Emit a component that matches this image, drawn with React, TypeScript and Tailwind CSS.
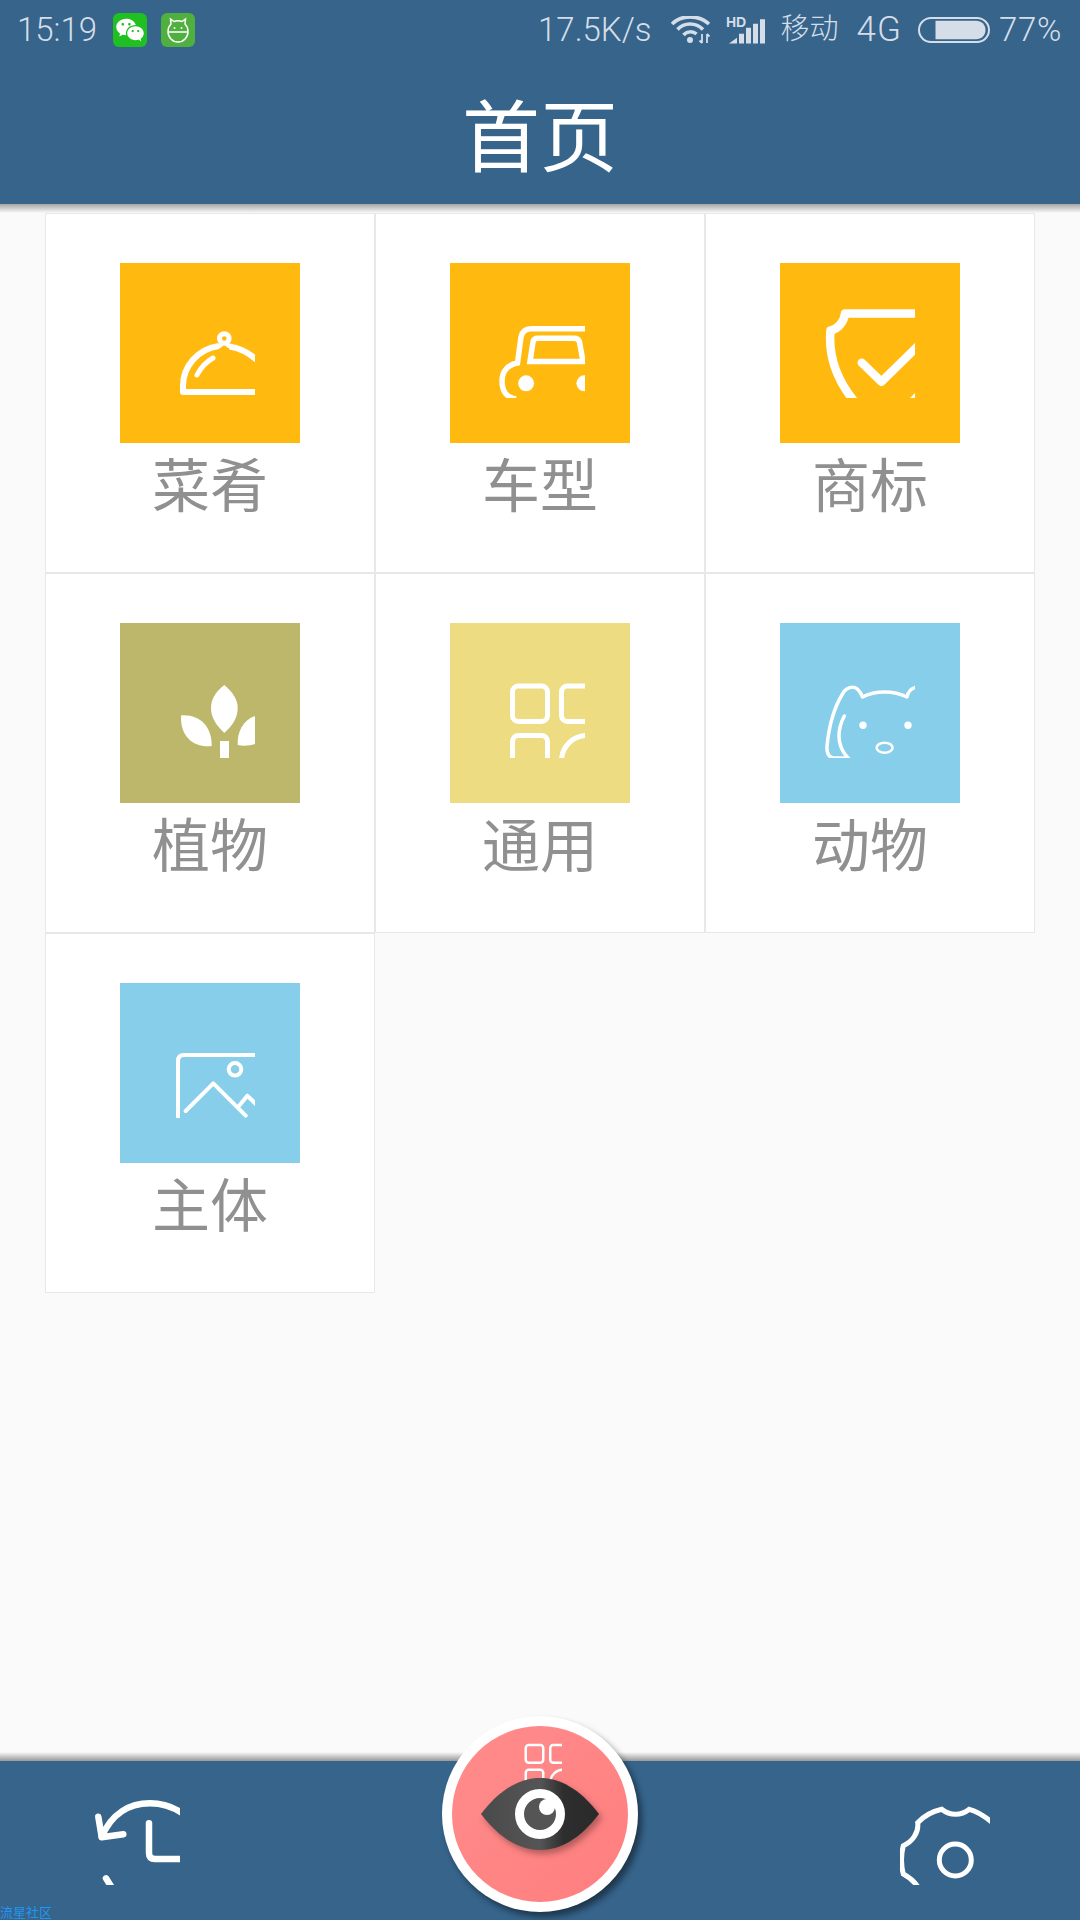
import type { ReactNode } from 'react';
import { RiWechatFill } from 'react-icons/ri';

const Icon = ({ children, size = 90 }: { children: ReactNode; size?: number }) => (
  <svg width={size} height={size} viewBox="0 0 90 90" fill="none" stroke="white" className="block overflow-hidden">
    {children}
  </svg>
);

const DishIcon = () => (
  <Icon>
    <g strokeWidth="6">
      <path d="M100 84 H18 V78 C18 58 33 41 54 38" strokeLinejoin="round" />
      <circle cx="59.3" cy="30.5" r="4.8" strokeWidth="5" />
      <path d="M53 38.5 C55.5 38 57 36.5 57 34 M65.5 38.5 C63 38 61.7 36.5 61.5 34" strokeWidth="4" />
      <path d="M64.5 38.5 C75 40 84 45 92 52" />
    </g>
    <path d="M48 50 C41 54 36 59 32 67" strokeWidth="5" strokeLinecap="round" />
  </Icon>
);

const CarIcon = () => (
  <Icon>
    <g strokeWidth="5.5">
      <path d="M95 20.7 H36 C30 20.7 27 24 26 29 L22.5 55 C12 57 7 64 7 73 C7 82 10 89 21 91" />
      <path d="M90 53.5 H35 L38 34 C38.5 31.5 40.5 30.3 43 30.3 H79 C82 30.3 84 32 84.5 34 L88 53.5" />
    </g>
    <circle cx="31.1" cy="75.3" r="8" fill="white" stroke="none" />
    <circle cx="89.4" cy="75.3" r="8" fill="white" stroke="none" />
  </Icon>
);

const ShieldIcon = () => (
  <Icon>
    <g strokeWidth="8.5">
      <path d="M95 5.5 H20 C19 14 13 21 5.5 22.5 C3 50 12 72 29 93" strokeLinejoin="round" />
      <path d="M36.8 54.7 L56.4 73.7 L95 36" strokeLinecap="round" strokeLinejoin="round" />
    </g>
    <path d="M90 85 L85 90 H90 Z" fill="white" stroke="none" />
  </Icon>
);

const PlantIcon = () => (
  <Icon>
    <g fill="white" stroke="none">
      <path d="M59.3 17 C50 24 46 32 46 40 C46 50 52 58 59.3 65 C67 58 72.7 50 72.7 40 C72.7 32 68 24 59.3 17 Z" />
      <path d="M16 47.5 C34 46 47 58 46.7 78 C30 80 15 70 16 47.5 Z" />
      <path d="M90 48 C78 52 72 64 72.7 77 C78 78 84 78 90 76 Z" />
      <rect x="55" y="73" width="9" height="17" />
    </g>
  </Icon>
);

const GridIcon = ({ size = 90 }: { size?: number }) => (
  <Icon size={size}>
    <g strokeWidth="5">
      <rect x="17.5" y="18" width="35" height="35.5" rx="6" />
      <rect x="66.5" y="18" width="40" height="35.5" rx="6" />
      <rect x="17.5" y="67.5" width="35" height="35" rx="6" />
      <path d="M66.5 92 A25.5 25.5 0 0 1 92 67.5" />
    </g>
  </Icon>
);

const PigIcon = () => (
  <Icon>
    <g strokeWidth="3.5" strokeLinejoin="round">
      <path d="M24 90 H8 C3.5 89 1.7 84 2 78 C4 58 10 38 17.5 26 C20 21 24 19.3 28 19.3 C32 19.3 35 23 37.5 29 C44 25.5 52 24 59.5 24 C67 24 75 25.5 82 29 C83 24 85 20.5 91 19.3" />
      <path d="M19.3 48 C15 56 14 62 14 68 C14 77 17 84 24 91" strokeLinecap="round" />
      <ellipse cx="59.6" cy="79.7" rx="8" ry="5" strokeWidth="2.5" />
    </g>
    <circle cx="38" cy="57.3" r="3.7" fill="white" stroke="none" />
    <circle cx="83" cy="57.3" r="3.7" fill="white" stroke="none" />
  </Icon>
);

const PictureIcon = () => (
  <Icon>
    <g strokeWidth="4" strokeLinecap="round" strokeLinejoin="round">
      <path d="M13 95 V33 C13 29 15 27 19 27 H95" />
      <circle cx="70" cy="41.3" r="6.3" />
      <path d="M20.7 83 L48.3 55.3 L80.7 87.7" />
      <path d="M73.3 78.7 L82.3 67.7 L93 78" />
    </g>
  </Icon>
);

const items = [
  { label: '菜肴', color: 'bg-[#ffb90f]', icon: <DishIcon /> },
  { label: '车型', color: 'bg-[#ffb90f]', icon: <CarIcon /> },
  { label: '商标', color: 'bg-[#ffb90f]', icon: <ShieldIcon /> },
  { label: '植物', color: 'bg-[#bdb76b]', icon: <PlantIcon /> },
  { label: '通用', color: 'bg-[#eedc82]', icon: <GridIcon /> },
  { label: '动物', color: 'bg-[#87ceeb]', icon: <PigIcon /> },
  { label: '主体', color: 'bg-[#87ceeb]', icon: <PictureIcon /> },
];

const StatusBar = () => (
  <div className="h-[60px] flex items-center pl-[17px] pr-[18px] text-[#d5dee8] font-['Roboto','Noto_Sans_CJK_SC',sans-serif] font-light text-[33px]">
    <span>15:19</span>
    <div className="ml-[16px] w-[34px] h-[34px] rounded-[6px] bg-[#20bf22] flex items-center justify-center">
      <RiWechatFill className="text-white" size={30} />
    </div>
    <div className="ml-[14px] w-[34px] h-[34px] rounded-[6px] bg-[#4fb03f] flex items-center justify-center">
      <svg width="26" height="28" viewBox="0 0 26 28" fill="none" stroke="white" strokeWidth="1.5">
        <path d="M6 8 L5.5 3 L9 5.5 C11.5 4.5 14.5 4.5 17 5.5 L20.5 3 L20 8 C22 10 23 12.5 23 15.5 C23 21.5 18.5 26 13 26 C7.5 26 3 21.5 3 15.5 C3 12.5 4 10 6 8 Z" />
        <path d="M3 16 H23" />
        <circle cx="9.5" cy="12" r="1" fill="white" stroke="none" />
        <circle cx="16.5" cy="12" r="1" fill="white" stroke="none" />
      </svg>
    </div>
    <div className="ml-auto flex items-center">
      <span>17.5K/s</span>
      <svg width="40" height="28" viewBox="0 0 40 28" fill="none" stroke="#d5dee8" className="ml-[19px]">
        <path d="M1 8 C10 -1.5 28 -1.5 38 8" strokeWidth="3.5" />
        <path d="M6.5 13.5 C13 6 25 6 32 13.5" strokeWidth="3.5" />
        <path d="M12.5 19 C16 15 22 15 25.5 18" strokeWidth="3.5" />
        <circle cx="19" cy="24" r="3" fill="#d5dee8" stroke="none" />
        <path d="M31 18 V27 M28.5 24.5 L31 27 M36 18 V27 M36 18 L38.5 20.5" strokeWidth="1.8" />
      </svg>
      <svg width="40" height="28" viewBox="0 0 40 28" className="ml-[15px] overflow-visible">
        <text x="0" y="11" fill="#d5dee8" fontSize="14" fontWeight="700" fontFamily="Liberation Sans">HD</text>
        <path d="M3 27.5 L11 21.7 V27.5 Z M13 17.7 H18 V27.5 H13 Z M20 11.7 H25 V27.5 H20 Z M27 7.7 H32 V27.5 H27 Z M34 3.3 H39 V27.5 H34 Z" fill="#d5dee8" />
      </svg>
      <span className="ml-[15px] text-[29px]">移动</span>
      <span className="ml-[18px] text-[35px] tracking-[1px]">4G</span>
      <svg width="72" height="26" viewBox="0 0 72 26" fill="none" className="ml-[16px]">
        <rect x="1" y="1" width="70" height="24" rx="12" stroke="#d5dee8" strokeWidth="2" />
        <path d="M17.5 3.7 H58 C63.5 3.7 67.5 7.5 67.5 13 C67.5 18.5 63.5 22.3 58 22.3 H17.5 Z" fill="#d5dee8" />
      </svg>
      <span className="ml-[9px] tracking-[0.7px]">77%</span>
    </div>
  </div>
);

const App = () => {
  return (
    <div className="w-[1080px] h-[1920px] flex flex-col bg-[#fafafa] overflow-hidden font-['Noto_Sans_CJK_SC',sans-serif]">
      <header className="h-[204px] bg-[#36648b]">
        <StatusBar />
        <div className="h-[144px] flex items-center justify-center text-white text-[78px] leading-none">首页</div>
      </header>
      <div className="h-[9px] bg-gradient-to-b from-[#a6a6a6] to-[#fafafa]" />

      <main className="flex-1 pl-[45px]">
        <div className="grid grid-cols-[repeat(3,330px)] auto-rows-[360px]">
          {items.map((item) => (
            <div key={item.label} className="bg-white border border-[#e8e8e8] flex flex-col items-center pt-[49px]">
              <div className={`w-[180px] h-[180px] flex items-center justify-center ${item.color}`}>{item.icon}</div>
              <span className="text-[58px] leading-[78px] text-[#909090]">{item.label}</span>
            </div>
          ))}
        </div>
      </main>

      <div className="h-[9px] bg-gradient-to-b from-[#fafafa] to-[#999999]" />
      <footer className="relative h-[159px] bg-[#36648b] flex justify-between px-[90px] pt-[34px]">
        <Icon>
          <g strokeWidth="6.5" strokeLinecap="round" strokeLinejoin="round">
            <path d="M11.7 41.7 C22 18 40 8.3 60 8.3 C72 8.3 84 12 95 20" />
            <path d="M8.3 21.7 L11.7 42.3 L33.3 39.3" />
            <path d="M59 28.3 V58 C59 62 61 64 65 64 H95" />
            <path d="M16 83.3 L24 96" />
          </g>
        </Icon>
        <Icon>
          <g strokeWidth="5">
            <path d="M18 92 C14 86 9 82 3.3 79 C1 70 1 60 3.3 50.7 C12 47 19 38 17.7 27.7 C24 21 32 16.5 41.7 14.3 C50 21 61 21 69.3 14.3 C78 16.5 85 21 95 30" />
            <circle cx="55.3" cy="65" r="16" />
          </g>
        </Icon>

        <div className="absolute left-1/2 -translate-x-1/2 bottom-[8px] w-[196px] h-[196px] rounded-full bg-white p-[10px] shadow-[4px_5px_6px_rgba(0,0,0,0.45)]">
          <div className="relative w-full h-full rounded-full bg-gradient-to-br from-[#ff8c8c] to-[#ff7e7e] flex items-center justify-center">
            <div className="absolute top-[10px] left-[65px]">
              <GridIcon size={45} />
            </div>
            <svg width="120" height="74" viewBox="0 0 120 74" className="relative drop-shadow-[3px_4px_3px_rgba(0,0,0,0.3)]">
              <defs>
                <linearGradient id="eye" x1="0" y1="0" x2="1" y2="0">
                  <stop offset="0" stopColor="#4a4a4a" />
                  <stop offset="0.5" stopColor="#555555" />
                  <stop offset="0.7" stopColor="#2e2e2e" />
                  <stop offset="1" stopColor="#2a2a2a" />
                </linearGradient>
              </defs>
              <path d="M1 37 C20 12 40 1 60 1 C80 1 100 12 119 37 C100 62 80 73 60 73 C40 73 20 62 1 37 Z" fill="url(#eye)" />
              <circle cx="60" cy="37" r="20.5" fill="#555555" stroke="white" strokeWidth="9" />
              <circle cx="67" cy="30" r="8" fill="white" />
            </svg>
          </div>
        </div>

        <span className="absolute left-0 bottom-0 text-[13px] leading-[16px] text-[#2196f3]">流星社区</span>
      </footer>
    </div>
  );
};

export default App;
